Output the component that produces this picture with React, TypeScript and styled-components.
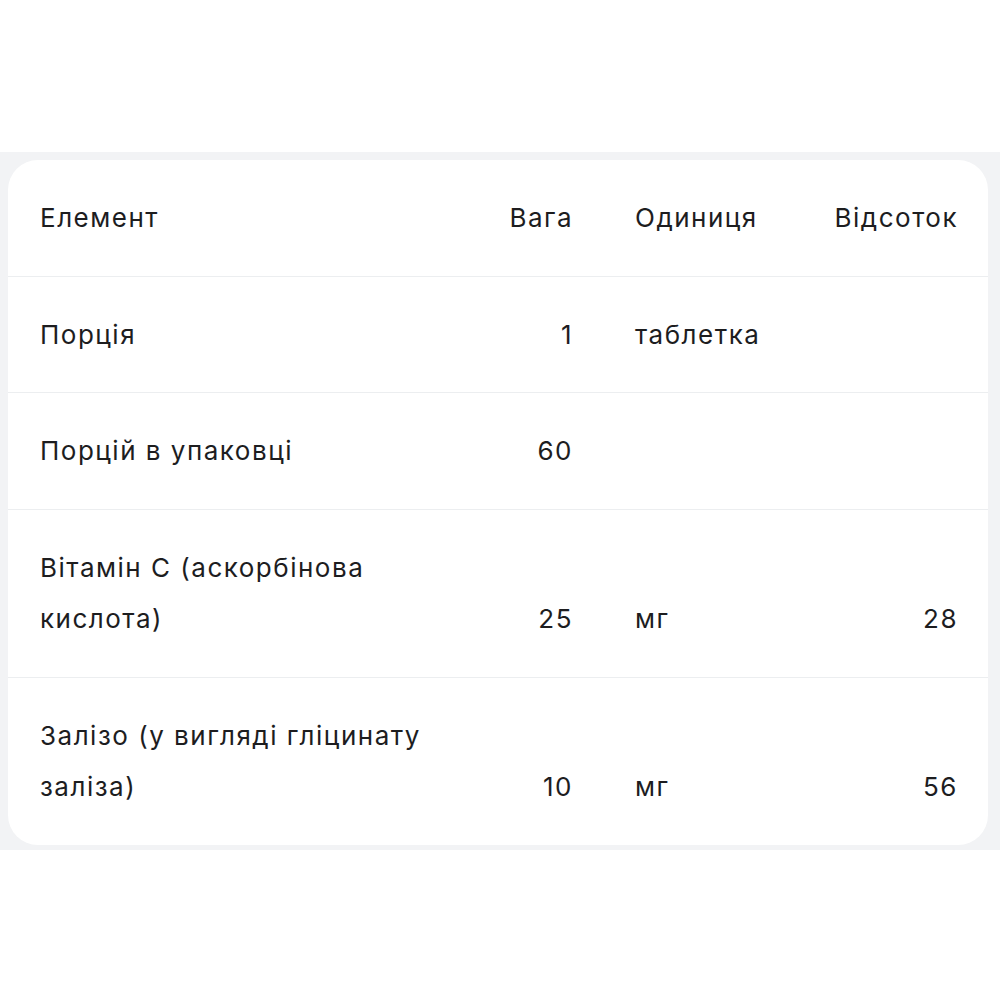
import styled, { createGlobalStyle } from 'styled-components';

const GlobalStyle = createGlobalStyle`
  html, body {
    margin: 0;
    padding: 0;
    background: #ffffff;
  }
  body {
    font-family: Inter, 'Noto Sans', Arial, sans-serif;
    color: #1d1d1f;
  }
`;

type Row = {
  name: string;
  weight: string;
  unit: string;
  percent: string;
};

const rows: Row[] = [
  { name: 'Порція', weight: '1', unit: 'таблетка', percent: '' },
  { name: 'Порцій в упаковці', weight: '60', unit: '', percent: '' },
  { name: 'Вітамін С (аскорбінова кислота)', weight: '25', unit: 'мг', percent: '28' },
  { name: 'Залізо (у вигляді гліцинату заліза)', weight: '10', unit: 'мг', percent: '56' },
];

export default function App() {
  return (
    <>
      <GlobalStyle />
      <StyledPage>
        <StyledBand>
          <StyledCard>
            <StyledTable>
              <colgroup>
                <col style={{ width: 462 }} />
                <col style={{ width: 133 }} />
                <col style={{ width: 180 }} />
                <col style={{ width: 205 }} />
              </colgroup>
              <thead>
                <tr>
                  <StyledCell as="th">Елемент</StyledCell>
                  <StyledCell as="th" $align="right">Вага</StyledCell>
                  <StyledCell as="th">Одиниця</StyledCell>
                  <StyledCell as="th" $align="right">Відсоток</StyledCell>
                </tr>
              </thead>
              <tbody>
                {rows.map((row) => (
                  <tr key={row.name}>
                    <StyledCell>{row.name}</StyledCell>
                    <StyledCell $align="right">{row.weight}</StyledCell>
                    <StyledCell>{row.unit}</StyledCell>
                    <StyledCell $align="right">{row.percent}</StyledCell>
                  </tr>
                ))}
              </tbody>
            </StyledTable>
          </StyledCard>
        </StyledBand>
      </StyledPage>
    </>
  );
}

const StyledPage = styled.div`
  padding-top: 152px;
  min-height: 1000px;
  box-sizing: border-box;
`;

const StyledBand = styled.div`
  background: #f2f3f5;
  padding: 8px 12px 5px 8px;
`;

const StyledCard = styled.div`
  background: #ffffff;
  border-radius: 30px;
  overflow: hidden;
`;

const StyledTable = styled.table`
  width: 100%;
  table-layout: fixed;
  border-collapse: collapse;

  tbody tr {
    border-top: 1px solid #eceef0;
  }
`;

const StyledCell = styled.td<{ $align?: 'left' | 'right' }>`
  padding: 32px;
  padding-right: ${({ $align }) => ($align === 'right' ? '30px' : '32px')};
  font-size: 26px;
  font-weight: 400;
  letter-spacing: 1.5px;
  line-height: 51.5px;
  text-align: ${({ $align }) => $align ?? 'left'};
  vertical-align: bottom;
  color: #1d1d1f;
`;
